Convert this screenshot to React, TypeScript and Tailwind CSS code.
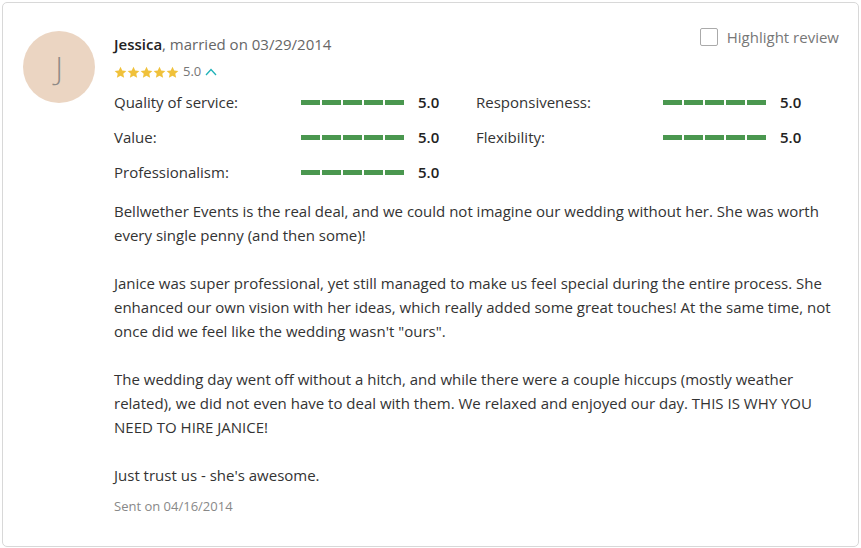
import React from "react";

const Star = () => (
  <svg width="13" height="13" viewBox="0 0 24 24" className="block">
    <path
      d="M12 1.5l3.2 7 7.6.8-5.7 5.1 1.6 7.5L12 18l-6.7 3.9 1.6-7.5L1.2 9.3l7.6-.8z"
      fill="#f0c13a"
    />
  </svg>
);

const Bars = () => (
  <div className="flex gap-[2px] w-[103px]">
    {[0, 1, 2, 3, 4].map((i) => (
      <div key={i} className="h-[5px] w-[19px] bg-[#4a974f]" />
    ))}
  </div>
);

const Rating = ({ label }: { label: string }) => (
  <div className="flex items-center h-[35px]">
    <div className="w-[187px] text-[#333]">{label}</div>
    <Bars />
    <div className="ml-[14px] font-semibold text-[#222]">5.0</div>
  </div>
);

export default function App() {
  return (
    <div
      className="w-[861px] h-[548px] bg-white p-[2px] pr-[2px]"
      style={{ fontFamily: "'Open Sans', 'Liberation Sans', sans-serif" }}
    >
      <div className="w-[857px] h-[545px] border border-[#d8d8d8] rounded-[5px] pl-[20px] pt-[28px] pr-[19px] flex text-[15px]">
        <div className="w-[72px] h-[72px] rounded-full bg-[#ebd5c2] flex items-center justify-center shrink-0">
          <span className="text-[31px] font-light text-[#8f8a86] leading-none">J</span>
        </div>
        <div className="ml-[19px] flex-1 min-w-0">
          <div className="flex justify-between items-start">
            <div>
              <div className="leading-[20px] pt-[3px]">
                <span className="font-semibold text-[#222]">Jessica</span>
                <span className="text-[#666]">, married on 03/29/2014</span>
              </div>
              <div className="flex items-center mt-[10px] h-[16px]">
                <div className="flex">
                  <Star />
                  <Star />
                  <Star />
                  <Star />
                  <Star />
                </div>
                <span className="ml-[4px] text-[13px] text-[#777]">5.0</span>
                <svg width="12" height="8" viewBox="0 0 12 8" className="ml-[4px]">
                  <path d="M1 7l5-5.5L11 7" fill="none" stroke="#1fb2b8" strokeWidth="1.3" />
                </svg>
              </div>
            </div>
            <label className="flex items-center text-[#777] -mt-[5px]">
              <span className="w-[18px] h-[18px] border border-[#aaa] rounded-[2px] bg-white" />
              <span className="ml-[9px]">Highlight review</span>
            </label>
          </div>
          <div className="grid grid-cols-[362px_1fr] mt-[5px]">
            <Rating label="Quality of service:" />
            <Rating label="Responsiveness:" />
            <Rating label="Value:" />
            <Rating label="Flexibility:" />
            <Rating label="Professionalism:" />
          </div>
          <div className="text-[#333] leading-[24px] mt-[9px] space-y-[24px]">
            <p>
              Bellwether Events is the real deal, and we could not imagine our wedding without her. She was worth every single penny (and then some)!
            </p>
            <p>
              Janice was super professional, yet still managed to make us feel special during the entire process. She enhanced our own vision with her ideas, which really added some great touches! At the same time, not once did we feel like the wedding wasn't "ours".
            </p>
            <p>
              The wedding day went off without a hitch, and while there were a couple hiccups (mostly weather related), we did not even have to deal with them. We relaxed and enjoyed our day. THIS IS WHY YOU NEED TO HIRE JANICE!
            </p>
            <p>Just trust us - she's awesome.</p>
          </div>
          <div className="mt-[10px] text-[13px] text-[#888]">Sent on 04/16/2014</div>
        </div>
      </div>
    </div>
  );
}
